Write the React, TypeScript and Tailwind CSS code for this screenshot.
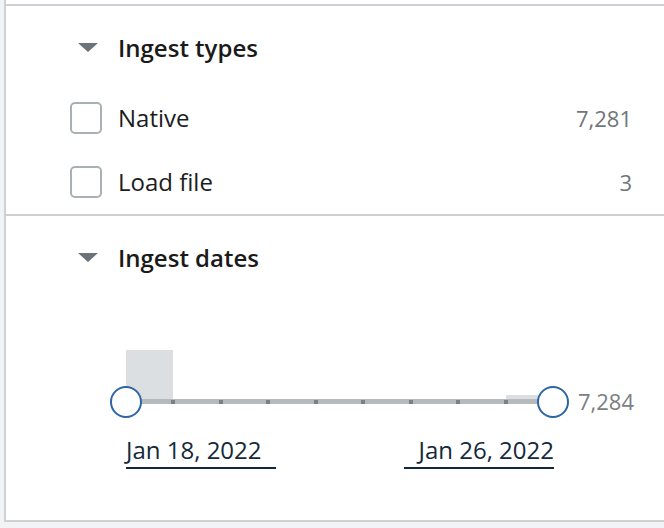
import React from 'react';

const ingestTypes = [
  { label: 'Native', count: '7,281' },
  { label: 'Load file', count: '3' },
];

// histogram bins for ingest dates (relative heights)
const bins = [50, 0, 0, 0, 0, 0, 0, 0, 5];
const ticks = [1, 2, 3, 4, 5, 6, 7, 8];

function Caret() {
  return (
    <svg width="20" height="10" viewBox="0 0 20 10" className="shrink-0">
      <polygon points="0,0 20,0 10,9" fill="#6b7378" />
    </svg>
  );
}

function SectionHeader({ title }: { title: string }) {
  return (
    <div className="flex h-[40px] items-center pl-[72px]">
      <Caret />
      <span className="ml-[20px] text-[24px] font-semibold text-[#1a1a1a]">{title}</span>
    </div>
  );
}

export default function App() {
  return (
    <div
      className="flex h-[528px] w-[664px] overflow-hidden bg-[#f2f3f5]"
      style={{ fontFamily: '"Open Sans", "Noto Sans", sans-serif' }}
    >
      <div className="ml-1 flex h-[522px] flex-1 flex-col border-l-2 border-[#cdd1d5] bg-white">
        <div className="h-[4px]" />

        {/* Ingest types */}
        <div className="h-[210px] border-t-2 border-[#cdd1d5] pt-[22px]">
          <SectionHeader title="Ingest types" />
          <div className="mt-[18px]">
            {ingestTypes.map((t) => (
              <div key={t.label} className="flex h-[64px] items-center pl-[64px] pr-[32px]">
                <div className="h-[32px] w-[32px] rounded-[5px] border-2 border-[#a9b1b4] bg-white" />
                <span className="ml-[16px] flex-1 text-[24px] text-[#1c1c1c]">{t.label}</span>
                <span className="text-[22px] text-[#70767a]">{t.count}</span>
              </div>
            ))}
          </div>
        </div>

        {/* Ingest dates */}
        <div className="flex-1 border-y-2 border-[#cdd1d5] pt-[22px]">
          <SectionHeader title="Ingest dates" />

          <div className="relative ml-[104px] mt-[62px] h-[80px] w-[540px]">
            <div className="absolute left-[16px] top-[10px] flex h-[50px] w-[427px] items-end">
              {bins.map((h, i) => (
                <div key={i} className="flex-1 bg-[#dcdfe2]" style={{ height: h }} />
              ))}
            </div>
            <div className="absolute left-[16px] top-[59px] h-[5px] w-[427px] bg-[#b5babd]">
              {ticks.map((t) => (
                <div
                  key={t}
                  className="absolute top-[0.5px] h-[4px] w-[4px] bg-[#7b8084]"
                  style={{ left: (427 / 9) * t - 2 }}
                />
              ))}
            </div>
            <div className="absolute left-0 top-[46px] h-[32px] w-[32px] rounded-full border-2 border-[#2c66a6] bg-white" />
            <div className="absolute left-[427px] top-[46px] h-[32px] w-[32px] rounded-full border-2 border-[#2c66a6] bg-white" />
            <span className="absolute left-[468px] top-[46px] text-[22px] leading-[30px] text-[#7a7f83]">7,284</span>
          </div>

          <div className="ml-[120px] mt-[16px] flex gap-[128px] text-[24px] leading-[28px] text-[#14293a]">
            <div className="w-[150px] border-b-2 border-[#10283a] pb-[3px]">Jan 18, 2022</div>
            <div className="w-[150px] border-b-2 border-[#10283a] pb-[3px] text-right">Jan 26, 2022</div>
          </div>
        </div>
      </div>
    </div>
  );
}
